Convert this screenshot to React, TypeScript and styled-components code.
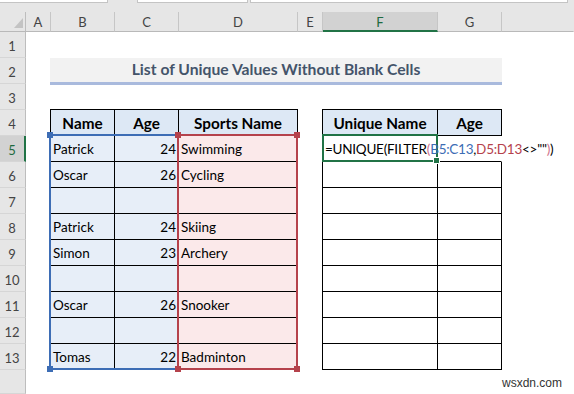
import * as React from "react";
import styled, { createGlobalStyle } from "styled-components";

const FONT = `Lato, "Open Sans", "Liberation Sans", sans-serif`;

const GlobalStyle = createGlobalStyle`
  html, body {
    margin: 0;
    padding: 0;
    background: #ffffff;
  }
  body {
    font-family: ${FONT};
    color: #000;
  }
`;

const Window = styled.div`
  position: relative;
  width: 574px;
  height: 394px;
  overflow: hidden;
  display: flex;
  flex-direction: column;
  background: #ffffff;
`;

const FormulaStrip = styled.div`
  flex: none;
  height: 12px;
  display: flex;
  align-items: flex-start;
  background: #e6e6e6;
`;

const StripBox = styled.div<{ $w: number; $offset: number }>`
  width: ${(p) => p.$w}px;
  height: 2px;
  margin-left: ${(p) => p.$offset}px;
  background: #ffffff;
  border: 1px solid #c4c4c4;
  border-top: none;
`;

const Sheet = styled.div`
  flex: 1;
  display: grid;
  grid-template-columns: 26px 25px 64px 64px 119px 25px 115px 64px 1fr;
  grid-template-rows: 20px repeat(13, 26px) 1fr;
  font-size: 13.5px;
`;

const Corner = styled.div`
  grid-row: 1;
  grid-column: 1;
  display: flex;
  align-items: flex-end;
  justify-content: flex-end;
  padding: 0 2px 3px 0;
  background: #e6e6e6;
  border-right: 1px solid #bdbdbd;
  border-bottom: 1px solid #b9b9b9;
`;

const ColHead = styled.div<{ $col: number; $active?: boolean; $last?: boolean }>`
  grid-row: 1;
  grid-column: ${(p) => p.$col};
  display: flex;
  align-items: center;
  justify-content: center;
  padding-top: ${(p) => (p.$active ? 2 : 1)}px;
  font-size: 13px;
  background: ${(p) => (p.$active ? "#d2d2d2" : "#e6e6e6")};
  color: ${(p) => (p.$active ? "#1f6a40" : "#444444")};
  border-right: 1px solid ${(p) => (p.$last ? "transparent" : "#c6c6c6")};
  border-bottom: ${(p) => (p.$active ? "2px solid #217346" : "1px solid #b9b9b9")};
`;

const RowHead = styled.div<{ $row: number; $active?: boolean }>`
  grid-column: 1;
  grid-row: ${(p) => p.$row};
  display: flex;
  align-items: flex-end;
  justify-content: center;
  padding: 0 ${(p) => (p.$active ? 0 : 1)}px 3px 0;
  font-size: 13px;
  line-height: 16px;
  background: ${(p) => (p.$active ? "#d2d2d2" : "#e6e6e6")};
  color: ${(p) => (p.$active ? "#1f6a40" : "#444444")};
  border-right: ${(p) => (p.$active ? "2px solid #217346" : "1px solid #bdbdbd")};
  border-bottom: 1px solid #d6d6d6;
`;

type Align = "left" | "right" | "center";

const justify: Record<Align, string> = {
  left: "flex-start",
  right: "flex-end",
  center: "center",
};

const outerShadow = (top?: boolean, left?: boolean) => {
  const parts: string[] = [];
  if (top) parts.push("0 -1px 0 #000");
  if (left) parts.push("-1px 0 0 #000");
  if (top && left) parts.push("-1px -1px 0 #000");
  return parts.length ? parts.join(", ") : "none";
};

const Cell = styled.div<{
  $row: number;
  $col: number;
  $fill?: string;
  $align?: Align;
  $bold?: boolean;
  $top?: boolean;
  $left?: boolean;
  $open?: boolean;
}>`
  grid-row: ${(p) => p.$row};
  grid-column: ${(p) => p.$col};
  min-width: 0;
  display: flex;
  align-items: flex-end;
  justify-content: ${(p) => justify[p.$align ?? "left"]};
  padding: 0 2px 4px 2px;
  line-height: 16px;
  white-space: nowrap;
  font-size: ${(p) => (p.$bold ? 15.3 : 13.5)}px;
  font-weight: ${(p) => (p.$bold ? 700 : 400)};
  background: ${(p) => p.$fill ?? "transparent"};
  border-right: 1px solid ${(p) => (p.$open ? "transparent" : "#000")};
  border-bottom: 1px solid #000;
  box-shadow: ${(p) => outerShadow(p.$top, p.$left)};
`;

const Title = styled.div`
  grid-row: 3;
  grid-column: 3 / 9;
  margin: 0 0 -1px -1px;
  display: flex;
  align-items: flex-end;
  justify-content: center;
  padding-bottom: 4px;
  background: #f2f2f2;
  border-bottom: 3px solid #a9badd;
  color: #44546a;
  font-weight: 700;
  font-size: 15.7px;
  line-height: 18px;
`;

const RangeBox = styled.div<{ $col: string; $color: string }>`
  grid-row: 6 / 15;
  grid-column: ${(p) => p.$col};
  margin: -2px 0 0 -2px;
  position: relative;
  border: 2px solid ${(p) => p.$color};
  pointer-events: none;
`;

const Handle = styled.span<{ $color: string; $v: "top" | "bottom"; $h: "left" | "right" }>`
  position: absolute;
  ${(p) => p.$v}: -4px;
  ${(p) => p.$h}: -4px;
  width: 6px;
  height: 6px;
  background: ${(p) => p.$color};
`;

const ActiveCell = styled.div`
  grid-row: 6;
  grid-column: 7;
  margin: -2px 0 0 -1px;
  position: relative;
  border: 2px solid #217346;
  pointer-events: none;
`;

const FillHandle = styled.span`
  position: absolute;
  right: -4px;
  bottom: -4px;
  width: 5px;
  height: 5px;
  background: #217346;
  border: 1px solid #ffffff;
`;

const Formula = styled.span`
  position: relative;
  z-index: 1;
  letter-spacing: -0.25px;
`;

const Ref = styled.span<{ $color: string }>`
  color: ${(p) => p.$color};
`;

const Watermark = styled.div`
  position: absolute;
  right: 12px;
  bottom: 4px;
  font-family: "Liberation Sans", Arial, sans-serif;
  font-size: 12px;
  color: #333333;
`;

const BLUE = "#3d6db5";
const RED = "#b5424c";
const HEAD_FILL = "#dde8f5";
const BLUE_FILL = "#e7eef8";
const PINK_FILL = "#fbe9ea";

const letters = ["A", "B", "C", "D", "E", "F", "G", ""];

const data: [string, string, string][] = [
  ["Patrick", "24", "Swimming"],
  ["Oscar", "26", "Cycling"],
  ["", "", ""],
  ["Patrick", "24", "Skiing"],
  ["Simon", "23", "Archery"],
  ["", "", ""],
  ["Oscar", "26", "Snooker"],
  ["", "", ""],
  ["Tomas", "22", "Badminton"],
];

export default function App() {
  return (
    <Window>
      <GlobalStyle />
      <FormulaStrip>
        <StripBox $w={107} $offset={-1} />
        <StripBox $w={109} $offset={29} />
        <StripBox $w={316} $offset={2} />
      </FormulaStrip>

      <Sheet>
        <Corner>
          <svg width="9" height="10" viewBox="0 0 9 10">
            <polygon points="9,0 9,10 0,10" fill="#c3c3c3" />
          </svg>
        </Corner>
        {letters.map((l, i) => (
          <ColHead key={i} $col={i + 2} $active={l === "F"} $last={l === ""}>
            {l}
          </ColHead>
        ))}
        {Array.from({ length: 14 }, (_, i) => (
          <RowHead key={i} $row={i + 2} $active={i === 4}>
            {i < 13 ? i + 1 : ""}
          </RowHead>
        ))}

        <Title>List of Unique Values Without Blank Cells</Title>

        {/* source table B4:D13 */}
        <Cell $row={5} $col={3} $fill={HEAD_FILL} $align="center" $bold $top $left>
          Name
        </Cell>
        <Cell $row={5} $col={4} $fill={HEAD_FILL} $align="center" $bold $top>
          Age
        </Cell>
        <Cell $row={5} $col={5} $fill={HEAD_FILL} $align="center" $bold $top>
          Sports Name
        </Cell>
        {data.map(([name, age, sport], i) => (
          <React.Fragment key={i}>
            <Cell $row={i + 6} $col={3} $fill={BLUE_FILL} $left>
              {name}
            </Cell>
            <Cell $row={i + 6} $col={4} $fill={BLUE_FILL} $align="right">
              {age}
            </Cell>
            <Cell $row={i + 6} $col={5} $fill={PINK_FILL}>
              {sport}
            </Cell>
          </React.Fragment>
        ))}

        {/* result table F4:G13 */}
        <Cell $row={5} $col={7} $fill={HEAD_FILL} $align="center" $bold $top $left>
          Unique Name
        </Cell>
        <Cell $row={5} $col={8} $fill={HEAD_FILL} $align="center" $bold $top>
          Age
        </Cell>
        <Cell $row={6} $col={7} $left $open>
          <Formula>
            =UNIQUE(FILTER<Ref $color="#d0708a">(</Ref>
            <Ref $color={BLUE}>B5:C13</Ref>,<Ref $color={RED}>D5:D13</Ref>
            &lt;&gt;""<Ref $color="#d0708a">)</Ref>)
          </Formula>
        </Cell>
        <Cell $row={6} $col={8} $open />
        {Array.from({ length: 8 }, (_, i) => (
          <React.Fragment key={i}>
            <Cell $row={i + 7} $col={7} $left />
            <Cell $row={i + 7} $col={8} />
          </React.Fragment>
        ))}

        <RangeBox $col="3 / 5" $color={BLUE}>
          <Handle $color={BLUE} $v="top" $h="left" />
          <Handle $color={BLUE} $v="bottom" $h="left" />
        </RangeBox>
        <RangeBox $col="5" $color={RED}>
          <Handle $color={RED} $v="top" $h="left" />
          <Handle $color={RED} $v="top" $h="right" />
          <Handle $color={RED} $v="bottom" $h="left" />
          <Handle $color={RED} $v="bottom" $h="right" />
        </RangeBox>
        <ActiveCell>
          <FillHandle />
        </ActiveCell>
      </Sheet>

      <Watermark>wsxdn.com</Watermark>
    </Window>
  );
}
